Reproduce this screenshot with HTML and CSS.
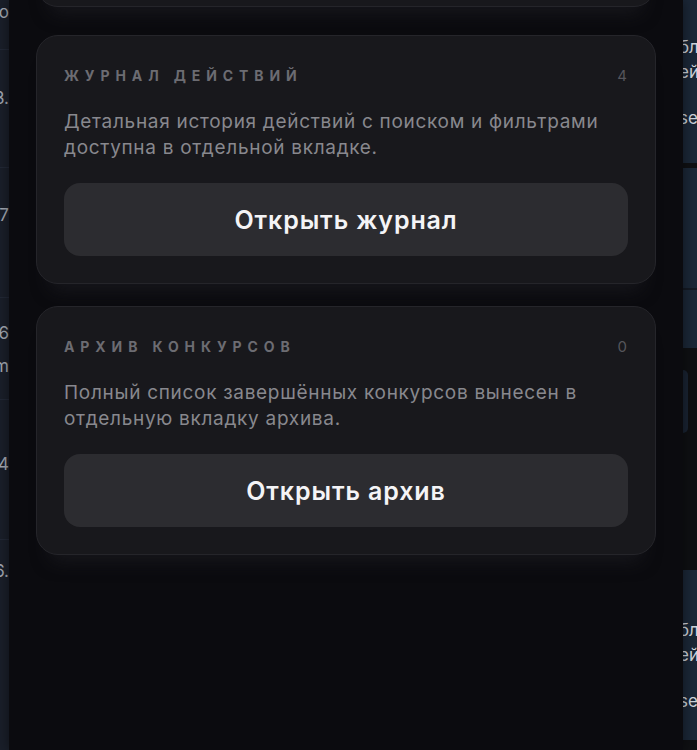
FILE: index.html
```
<!DOCTYPE html>
<html lang="ru">
<head>
    <meta charset="UTF-8">
    <meta name="viewport" content="width=device-width, initial-scale=1.0">
    <title>Панель управления</title>
    <link rel="stylesheet" href="styles.css">
</head>
<body>
    <div class="page">
        <aside class="bg-left">
            <div class="bg-row row-a"><span>10o</span></div>
            <div class="bg-row row-b"><span>12.3.</span></div>
            <div class="bg-row row-c"><span>27</span></div>
            <div class="bg-row row-d"><span>16</span><span>5 m</span></div>
            <div class="bg-row row-e"><span>14</span></div>
            <div class="bg-row row-f"><span>26.</span></div>
        </aside>

        <main class="drawer">
            <div class="card card-prev"></div>

            <section class="card">
                <div class="card-head">
                    <h3>Журнал действий</h3>
                    <span class="count">4</span>
                </div>
                <p>Детальная история действий с поиском и фильтрами доступна в отдельной вкладке.</p>
                <button type="button" class="open-btn">Открыть журнал</button>
            </section>

            <section class="card">
                <div class="card-head">
                    <h3>Архив конкурсов</h3>
                    <span class="count">0</span>
                </div>
                <p>Полный список завершённых конкурсов вынесен в отдельную вкладку архива.</p>
                <button type="button" class="open-btn">Открыть архив</button>
            </section>
        </main>

        <aside class="bg-right">
            <div class="tile tile-1">
                <span>блокировка</span>
                <span>ейка</span>
                <span class="gap">session</span>
            </div>
            <div class="tile tile-2"></div>
            <div class="tile tile-3"></div>
            <div class="dark-zone"><div class="pill"></div></div>
            <div class="tile tile-4">
                <span>блокировка</span>
                <span>ейка</span>
                <span class="gap">session</span>
            </div>
        </aside>
    </div>
</body>
</html>
```

FILE: styles.css
```
body {
    margin: 0;
    padding: 0;
    background-color: #0b0b0f;
    font-family: "Inter", "Noto Sans", sans-serif;
    overflow: hidden;
}

.page {
    display: grid;
    grid-template-columns: 9px 1fr 14px;
    height: 750px;
    overflow: hidden;
}

/* page behind the drawer */
.bg-left {
    background-color: #1a1f2a;
    color: #a4a9b3;
    font-size: 17px;
    line-height: 24px;
    overflow: hidden;
}

.bg-row {
    display: flex;
    flex-direction: column;
    align-items: flex-end;
    border-bottom: 1px solid #222836;
    box-sizing: border-box;
    white-space: nowrap;
}

.row-a { height: 50px; }
.row-b { height: 118px; padding-top: 36px; }
.row-c { height: 130px; padding-top: 35px; }
.row-d { height: 102px; padding-top: 23px; gap: 9px; }
.row-e { height: 140px; padding-top: 52px; }
.row-f { height: 210px; padding-top: 19px; border-bottom: none; }

.bg-right {
    background-color: #0f1013;
    color: #cfd5dd;
    font-size: 17px;
    line-height: 25px;
    overflow: hidden;
}

.tile {
    display: flex;
    flex-direction: column;
    background-color: #1b2737;
    white-space: nowrap;
    box-sizing: border-box;
}

.tile span {
    margin-left: -4px;
}

.tile .gap {
    margin-top: 21px;
}

.tile-1 { height: 163px; padding-top: 35px; }
.tile-2 { height: 122px; margin-top: 5px; border-bottom: 2px solid #141a24; }
.tile-3 { height: 58px; }
.tile-4 { height: 170px; padding-top: 48px; }

.dark-zone {
    height: 222px;
    padding-top: 22px;
    box-sizing: border-box;
}

.pill {
    width: 10px;
    height: 63px;
    margin-left: -5px;
    border-radius: 8px;
    background-color: #1a2433;
}

/* drawer */
.drawer {
    background-color: #0b0b0f;
    padding: 0 27px;
    box-shadow: 0 0 12px rgba(0, 0, 0, 0.5);
    position: relative;
    z-index: 1;
}

.card {
    background-color: #18181c;
    border: 1px solid #25252a;
    border-radius: 22px;
    padding: 27px;
    margin-bottom: 22px;
    box-shadow: 0 20px 18px -14px rgba(28, 28, 34, 0.7);
}

.card-prev {
    height: 60px;
    margin-top: -55px;
    margin-bottom: 28px;
    padding: 0;
}

.card-head {
    display: flex;
    justify-content: space-between;
    align-items: center;
    height: 24px;
    margin-bottom: 22px;
}

.card-head h3 {
    margin: 0;
    font-size: 14px;
    font-weight: 700;
    letter-spacing: 5.9px;
    text-transform: uppercase;
    color: #6c6c72;
}

.count {
    font-size: 15px;
    color: #55555b;
    margin-right: 1px;
}

.card p {
    margin: 0 0 22px;
    font-size: 19px;
    line-height: 26px;
    color: #88888e;
    letter-spacing: 0.7px;
}

.open-btn {
    display: block;
    width: 100%;
    height: 73px;
    border: none;
    border-radius: 16px;
    background-color: #2c2c30;
    color: #f4f4f6;
    font-family: inherit;
    font-size: 25px;
    font-weight: 600;
    letter-spacing: 0.9px;
    cursor: pointer;
}
```
